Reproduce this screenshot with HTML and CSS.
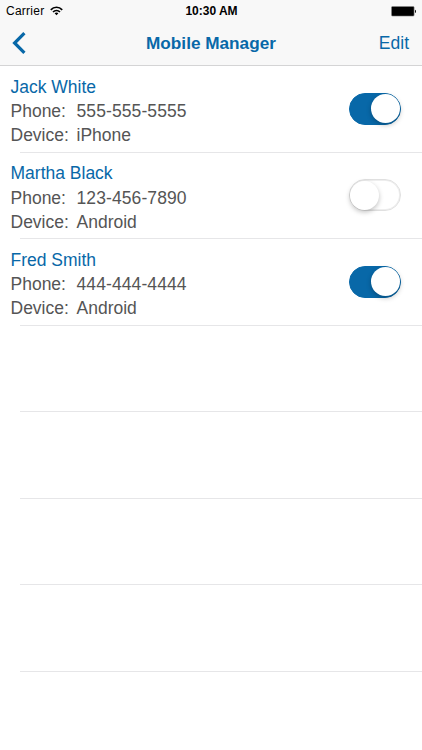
FILE: index.html
```html
<!DOCTYPE html>
<html lang="en">
<head>
    <meta charset="UTF-8" />
    <meta name="viewport" content="width=device-width, initial-scale=1.0" />
    <title>Mobile Manager</title>
    <link rel="stylesheet" href="styles.css">
</head>
<body>

<header class="header">
    <div class="status-bar">
        <div class="carrier">
            <span>Carrier</span>
            <svg class="wifi" width="13" height="10" viewBox="0 0 13 10">
                <g fill="none" stroke="#000" stroke-width="1.7">
                    <path d="M0.8 3.8 C4 0.4 9 0.4 12.2 3.8" />
                    <path d="M3 6 C5 4 8 4 10 6" />
                </g>
                <path d="M4.6 7.3 C5.7 6.3 7.3 6.3 8.4 7.3 L6.5 9.3 Z" />
            </svg>
        </div>
        <span class="time">10:30 AM</span>
        <svg class="battery" width="26" height="11" viewBox="0 0 26 11">
            <rect x="0.5" y="0.5" width="22.6" height="9.6" rx="1" fill="#000" stroke="#888" stroke-width="0.6" />
            <path d="M24 3.8 C25.3 4 25.3 6.9 24 7.1 Z" />
        </svg>
    </div>
    <nav class="nav-bar">
        <a href="#" class="back-link" aria-label="Back">
            <svg width="15" height="22" viewBox="0 0 15 22">
                <path d="M12.4 1.2 L2.6 11 L12.4 20.8" fill="none" stroke="#0868a8" stroke-width="3.2" />
            </svg>
        </a>
        <h1>Mobile Manager</h1>
        <a href="#" class="edit-link">Edit</a>
    </nav>
</header>

<ul class="list">
    <li class="row">
        <div class="info">
            <h2>Jack White</h2>
            <p><span class="label">Phone:</span><span class="number">555-555-5555</span></p>
            <p><span class="label">Device:</span><span>iPhone</span></p>
        </div>
        <button class="switch on" role="switch" aria-checked="true" aria-label="Jack White"><span class="knob"></span></button>
    </li>
    <li class="row">
        <div class="info">
            <h2>Martha Black</h2>
            <p><span class="label">Phone:</span><span class="number">123-456-7890</span></p>
            <p><span class="label">Device:</span><span>Android</span></p>
        </div>
        <button class="switch" role="switch" aria-checked="false" aria-label="Martha Black"><span class="knob"></span></button>
    </li>
    <li class="row">
        <div class="info">
            <h2>Fred Smith</h2>
            <p><span class="label">Phone:</span><span class="number">444-444-4444</span></p>
            <p><span class="label">Device:</span><span>Android</span></p>
        </div>
        <button class="switch on" role="switch" aria-checked="true" aria-label="Fred Smith"><span class="knob"></span></button>
    </li>
    <li class="row"></li>
    <li class="row"></li>
    <li class="row"></li>
    <li class="row"></li>
</ul>

<script>
    document.querySelectorAll('.switch').forEach(function(button) {
        button.addEventListener('click', function() {
            const on = button.classList.toggle('on');
            button.setAttribute('aria-checked', on);
        });
    });
</script>

</body>
</html>
```
FILE: styles.css
```css
body {
    font-family: "Liberation Sans", Arial, sans-serif;
    background-color: #ffffff;
    color: #555;
    height: 100vh;
    margin: 0;
    overflow: hidden;
}

.header {
    height: 66px;
    box-sizing: border-box;
    background-color: #f8f8f8;
    border-bottom: 1px solid #d4d4d5;
}

.status-bar {
    display: grid;
    grid-template-columns: 1fr auto 1fr;
    align-items: center;
    height: 22px;
    padding: 0 5px 0 6px;
    color: #000;
    font-size: 12px;
}

.carrier {
    display: flex;
    align-items: center;
    gap: 5.5px;
    letter-spacing: 0.25px;
}

.wifi {
    margin-bottom: 1px;
}

.time {
    font-weight: bold;
    font-size: 12px;
}

.battery {
    justify-self: end;
}

.nav-bar {
    display: grid;
    grid-template-columns: 1fr auto 1fr;
    align-items: center;
    height: 42px;
    padding: 0 12px;
}

.nav-bar a, h1, h2 {
    color: #0868a8;
    text-decoration: none;
}

h1 {
    font-size: 17.2px;
    margin: 0;
}

.back-link {
    display: flex;
}

.edit-link {
    justify-self: end;
    margin-right: 1px;
    font-size: 17.5px;
}

.list {
    list-style: none;
    margin: 0;
    padding: 0;
}

.row {
    display: flex;
    justify-content: space-between;
    height: 86.5px;
    box-sizing: border-box;
    padding: 8.5px 21px 0 10.5px;
    background: linear-gradient(#e6e6e8, #e6e6e8) 20px 100% / 100% 1px no-repeat;
}

h2 {
    font-size: 17.5px;
    font-weight: normal;
    line-height: 24.5px;
    margin: 0;
}

.info p {
    display: flex;
    font-size: 17.5px;
    line-height: 24px;
    margin: 0;
}

.label {
    width: 66px;
}

.number {
    letter-spacing: 0.1px;
}

.switch {
    width: 52px;
    height: 32px;
    box-sizing: border-box;
    margin: 18px 0 0;
    padding: 0;
    display: flex;
    align-items: center;
    border: 1px solid #e0e0e0;
    border-radius: 16px;
    background-color: #ffffff;
    box-shadow: inset 0 0 0 1px #eeeeee;
    cursor: pointer;
}

.knob {
    width: 29px;
    height: 29px;
    border-radius: 50%;
    background-color: #ffffff;
    box-shadow: 0 2px 5px rgba(0, 0, 0, 0.25);
}

.switch.on {
    justify-content: flex-end;
    background-color: #0868a8;
    border-color: #0868a8;
    box-shadow: none;
}
```
